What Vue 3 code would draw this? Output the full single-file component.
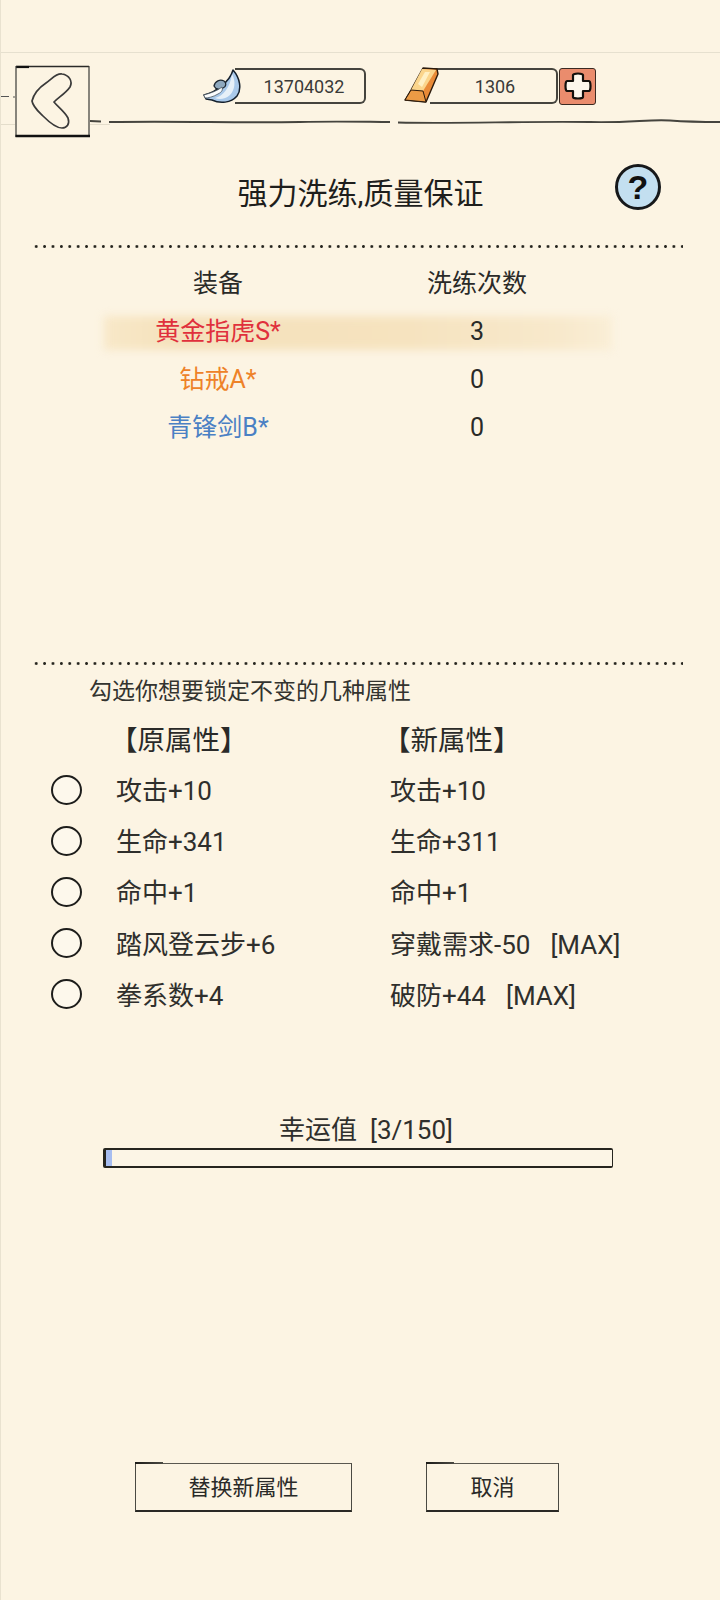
<script setup>
const equips = [
  { name: '黄金指虎S*', count: 3, tone: 'red', active: true },
  { name: '钻戒A*', count: 0, tone: 'orange', active: false },
  { name: '青锋剑B*', count: 0, tone: 'blue', active: false },
]
const attrs = [
  { old: '攻击+10', neu: '攻击+10' },
  { old: '生命+341', neu: '生命+311' },
  { old: '命中+1', neu: '命中+1' },
  { old: '踏风登云步+6', neu: '穿戴需求-50', max: true },
  { old: '拳系数+4', neu: '破防+44', max: true },
]
</script>

<template>
  <div class="page">
    <div class="status"></div>

    <header class="topbar">
      <svg class="rule" viewBox="0 0 720 94" width="720" height="94" fill="none">
        <path d="M0 43.5 H9 M13 44 H15" stroke="#555" stroke-width="1.2" />
        <path d="M0 71.5 H16 M90 71.5 H110" stroke="#e4ddcb" stroke-width="1" />
        <path d="M90 68 L101 68.5 M109 69 C190 68 230 70 300 69 C340 68 370 69 390 69 M398 69.5 C460 71 520 68 590 69 C630 70 650 66 670 67.5 C690 69 705 69 720 69" stroke="#45443e" stroke-width="1.9" />
      </svg>

      <button class="back" aria-label="返回">
        <svg viewBox="0 0 75 73" width="75" height="73" fill="none">
          <path d="M1 1.5 H74" stroke="#2a2a28" stroke-width="1.5" />
          <path d="M1 2 H14" stroke="#111" stroke-width="2.2" />
          <path d="M1 1 V72 M74 1 V72" stroke="#3a3a38" stroke-width="1.2" />
          <path d="M0.5 71 H75" stroke="#111" stroke-width="2.4" />
          <path d="M17 36 C19 28 25 22 31 18 C37 14 41 8 47 9 C54 10 58 16 55 22 C51 28 44 32 39 37 C43 42 50 47 53 53 C55 59 52 63 47 63 C41 63 33 56 28 51 C23 46 18 42 17 36 Z" stroke="#3a3a3a" stroke-width="1.7" />
        </svg>
      </button>

      <div class="wallet">
        <div class="coin">
          <svg class="moon" viewBox="0 0 38 36" width="38" height="36">
            <path d="M30 2 C37 10 39 21 34 28 C28 35 17 36 9 32 L3 31 L1 27 C9 25 14 22 18 18 C24 14 28 9 30 2 Z" fill="#a9c9ea" stroke="#15202c" stroke-width="1.5" stroke-linejoin="round" />
            <path d="M29 6 C33 13 32 22 27 27 C23 31 16 32 12 30 C20 28 27 20 29 6 Z" fill="#e6f0f8" />
            <path d="M11 18 C12 13 17 11 21 13 C24 15 23 19 20 20 C17 22 13 22 11 18 Z" fill="#8fa9bf" stroke="#1c2630" stroke-width="1.3" />
            <path d="M0.8 27 C8 25 14 23 19 19 C20 22 19 24 15 26 C10 29 5 30 2 30 Z" fill="#fafcfd" stroke="#4a5560" stroke-width="0.8" />
          </svg>
          <span class="pill pill-a">13704032</span>
        </div>
        <div class="coin gold">
          <svg class="bar-icon" viewBox="0 0 35 36" width="35" height="36">
            <path d="M1 33 L7 23 L19 1 L33 2 L34 7 L22 35 Z" fill="#e98a37" stroke="#2b1a0c" stroke-width="1.4" stroke-linejoin="round" />
            <path d="M7 23 L18 2 L32 3 L19 24 Z" fill="#fbd58c" />
            <path d="M14 17 L21 5 L26 5 L18 20 Z" fill="#fff0c4" />
            <path d="M7 23 L19 24 L22 35 L1 33 Z" fill="#eb9a45" stroke="#2b1a0c" stroke-width="1" stroke-linejoin="round" />
          </svg>
          <span class="pill pill-b">1306</span>
          <button class="plus" aria-label="充值">
            <svg viewBox="0 0 36 36" width="36" height="36">
              <path d="M13 7 C13 5 23 5 23 7 V13 H29 C31 13 31 23 29 23 H23 V29 C23 31 13 31 13 29 V23 H7 C5 23 5 13 7 13 H13 Z" fill="#fdf7ec" stroke="#14100c" stroke-width="2.2" stroke-linejoin="round" />
            </svg>
          </button>
        </div>
      </div>
    </header>

    <section class="title-row">
      <h1>强力洗练,质量保证</h1>
      <button class="help" aria-label="帮助">?</button>
    </section>

    <div class="dots"></div>

    <section class="table">
      <div class="tr th"><span>装备</span><span>洗练次数</span></div>
      <div v-for="e in equips" :key="e.name" class="tr" :class="{ active: e.active }">
        <span :class="e.tone">{{ e.name }}</span>
        <span>{{ e.count }}</span>
      </div>
    </section>

    <div class="dots second"></div>

    <p class="hint">勾选你想要锁定不变的几种属性</p>

    <section class="attrs">
      <div class="heads"><span>【原属性】</span><span>【新属性】</span></div>
      <div v-for="a in attrs" :key="a.old" class="attr">
        <i class="radio"></i>
        <span>{{ a.old }}</span>
        <span>{{ a.neu }}<em v-if="a.max" class="max">[MAX]</em></span>
      </div>
    </section>

    <section class="luck">
      <div class="luck-label">幸运值<span class="luck-num">[3/150]</span></div>
      <div class="track"><div class="fill"></div></div>
    </section>

    <footer class="actions">
      <button class="btn wide">替换新属性</button>
      <button class="btn narrow">取消</button>
    </footer>
  </div>
</template>

<style>
html, body { margin: 0; background: #fcf4e3; }
</style>

<style scoped>
.page {
  position: relative;
  width: 720px;
  height: 1600px;
  overflow: hidden;
  box-sizing: border-box;
  display: flex;
  flex-direction: column;
  background: #fcf4e3;
  border-left: 1px solid #e9e2d0;
  color: #2a2a28;
  font-family: Roboto, "Noto Sans CJK SC", sans-serif;
}
button {
  font: inherit;
  color: inherit;
  background: none;
  padding: 0;
  border: 0;
}
.status {
  height: 53px;
  flex: none;
  border-bottom: 1px solid #e6e0cf;
  box-sizing: border-box;
}
.topbar {
  position: relative;
  height: 94px;
  flex: none;
  display: flex;
  align-items: flex-start;
  padding: 12px 0 0 14px;
  box-sizing: border-box;
}
.rule { position: absolute; left: -1px; top: 0; }
.back {
  position: relative;
  width: 75px;
  height: 73px;
  background: #fcf4e3;
  line-height: 0;
}
.wallet {
  position: relative;
  display: flex;
  margin: 3px 0 0 113px;
}
.coin { position: relative; display: flex; align-items: center; height: 36px; }
.moon { position: relative; z-index: 1; }
.pill {
  box-sizing: border-box;
  height: 36px;
  display: flex;
  align-items: center;
  justify-content: center;
  font-size: 18px;
  color: #3a3a38;
  border: 2px solid #45443e;
  border-left: 0;
  border-radius: 0 6px 6px 0;
}
.pill-a { width: 131px; margin-left: -6px; padding-left: 9px; }
.gold { margin-left: 38px; }
.bar-icon { position: relative; z-index: 1; margin-top: -2px; }
.pill-b { width: 128px; margin-left: -9px; padding-left: 4px; }
.plus {
  width: 37px;
  height: 37px;
  margin-left: 1px;
  box-sizing: border-box;
  background: #ea8c6d;
  border: 1.5px solid #3a2a22;
  border-radius: 3px;
  line-height: 0;
}
.plus svg { margin: -0.5px 0 0 -0.5px; }
.title-row {
  position: relative;
  height: 60px;
  margin-top: 14px;
  flex: none;
  display: flex;
  align-items: center;
  justify-content: center;
}
h1 {
  margin: 0;
  font-size: 30px;
  font-weight: 400;
  color: #1e1e1c;
}
.help {
  position: absolute;
  left: 614px;
  top: 3px;
  width: 46px;
  height: 46px;
  box-sizing: border-box;
  border: 3px solid #16181a;
  border-radius: 50%;
  background: #c3dff0;
  font-family: "Liberation Sans", sans-serif;
  font-size: 34px;
  font-weight: 700;
  line-height: 39px;
  text-align: center;
  color: #111;
}
.dots {
  flex: none;
  margin: 24px 0 0 31px;
  width: 651px;
  height: 3px;
  background-image: radial-gradient(circle at center, #26251f 1.2px, transparent 1.6px);
  background-size: 8.4px 3px;
}
.table { margin-top: 11px; flex: none; }
.tr {
  position: relative;
  height: 48px;
  display: grid;
  grid-template-columns: 280px 238px;
  padding-left: 77px;
  font-size: 25px;
  line-height: 48px;
  text-align: center;
}
.tr.th { height: 49px; line-height: 49px; }
.tr span { position: relative; }
.active::before {
  content: "";
  position: absolute;
  left: 103px;
  right: 108px;
  top: 8px;
  bottom: 6px;
  background: linear-gradient(90deg, #f8e8c8 0%, #f5e1bb 15%, #f6e3bf 60%, #f8e9cc 90%, #faeed6 100%);
  filter: blur(4px);
}
.red { color: #e0303c; }
.orange { color: #ee8228; }
.blue { color: #4a80c4; }
.second { margin-top: 210px; }
.hint {
  margin: 10px 0 0 88px;
  font-size: 23px;
  line-height: 34px;
  color: #33332f;
  flex: none;
}
.attrs { margin-top: 8px; flex: none; }
.heads,
.attr {
  display: grid;
  grid-template-columns: 115px 274px 1fr;
  align-items: center;
}
.heads {
  grid-template-columns: 109px 273px 1fr;
  font-size: 27.5px;
  line-height: 47px;
  height: 46px;
}
.heads span:first-child { grid-column: 2; grid-row: 1; }
.heads span:last-child { grid-column: 3; grid-row: 1; }
.attr {
  height: 51.2px;
  font-size: 26px;
  color: #2f2f2c;
  white-space: nowrap;
}
.radio {
  display: block;
  margin: 2px 0 0 50px;
  width: 31px;
  height: 30px;
  box-sizing: border-box;
  border: 2px solid #1d1d1b;
  border-radius: 50%;
  background: #fdf8ec;
}
.max { margin-left: 20px; font-style: normal; }
.luck { margin-top: 93px; flex: none; }
.luck-label {
  margin-left: 278px;
  font-size: 26px;
  line-height: 36px;
  color: #2f2f2c;
}
.luck-num { margin-left: 13px; }
.track {
  margin: 0 0 0 102px;
  width: 510px;
  height: 20px;
  box-sizing: border-box;
  border: 2px solid #26251f;
  border-left-width: 3px;
  border-right-width: 1.5px;
  border-radius: 2px;
  background: #fcf5e6;
}
.fill { width: 6px; height: 100%; background: #a7bdf0; }
.actions {
  display: flex;
  margin: 295px 0 0 134px;
  gap: 74px;
  flex: none;
}
.btn {
  position: relative;
  height: 49px;
  box-sizing: border-box;
  padding-bottom: 3px;
  border: 1.5px solid #4a4942;
  border-top-color: #5a5850;
  border-bottom: 2.5px solid #2a2925;
  font-size: 22px;
  color: #2a2a28;
}
.btn::before {
  content: "";
  position: absolute;
  left: -1.5px;
  top: -1.5px;
  width: 28px;
  height: 1.5px;
  background: linear-gradient(90deg, #1c1b18, #4a4942);
}
.wide { width: 217px; }
.narrow { width: 133px; }
</style>
